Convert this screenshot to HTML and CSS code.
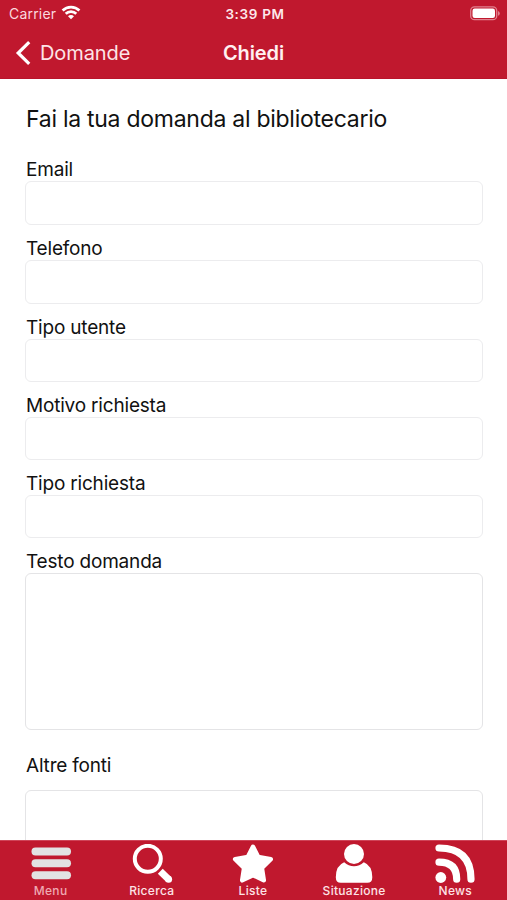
FILE: index.html
```html
<!DOCTYPE html>
<html lang="it">
<head>
<meta charset="utf-8">
<title>Chiedi</title>
<link rel="stylesheet" href="styles.css">
</head>
<body>
<div class="app">
  <header class="header">
    <div class="status">
      <div class="carrier"><span>Carrier</span>
        <svg class="wifi" width="20" height="15" viewBox="0 0 20 15" fill="none" stroke="#fff" stroke-width="2.7"><path d="M1.6 5.5a12 12 0 0 1 16.8 0M4.7 8.8a7.6 7.6 0 0 1 10.6 0"/><path d="M10 14.2 7 11.3a4.2 4.2 0 0 1 6 0Z" fill="#fff" stroke="none"/></svg>
      </div>
      <span class="time">3:39 PM</span>
      <svg class="battery" width="31" height="15" viewBox="0 0 31 15"><rect x=".7" y=".9" width="26" height="12.8" rx="3.8" fill="none" stroke="#e0808e" stroke-width="1.3"/><rect x="2.5" y="2.6" width="22.5" height="9.3" rx="2.2" fill="#fff"/><path d="M28 5v4.8q1.8-.8 1.8-2.4T28 5Z" fill="#e0808e"/></svg>
    </div>
    <nav class="navbar">
      <a class="back"><svg width="16" height="26" viewBox="0 0 16 26" fill="none" stroke="#fff" stroke-width="3.2"><path d="M14.2 2.2 3.2 13l11 10.8"/></svg><span>Domande</span></a>
      <h1>Chiedi</h1>
      <span></span>
    </nav>
  </header>
  <main class="form">
    <h2>Fai la tua domanda al bibliotecario</h2>
    <label class="field"><span>Email</span><input class="tall" type="text"></label>
    <label class="field"><span>Telefono</span><input class="tall" type="text"></label>
    <label class="field"><span>Tipo utente</span><input type="text"></label>
    <label class="field"><span>Motivo richiesta</span><input type="text"></label>
    <label class="field"><span>Tipo richiesta</span><input type="text"></label>
    <label class="field"><span>Testo domanda</span><textarea></textarea></label>
    <label class="field other"><span>Altre fonti</span><textarea></textarea></label>
  </main>
  <footer class="tabs">
    <a class="tab menu"><svg width="42" height="40" viewBox="0 0 42 40" fill="#e2e2e3"><rect x="1.5" y="3.4" width="39.5" height="8" rx="4"/><rect x="1.5" y="15.3" width="39.5" height="8" rx="4"/><rect x="1.5" y="27.2" width="39.5" height="8" rx="4"/></svg><span>Menu</span></a>
    <a class="tab"><svg width="42" height="40" viewBox="0 0 42 40" fill="none" stroke="#fff"><circle cx="16.8" cy="14.8" r="13" stroke-width="4"/><path d="m29.3 27.2 8.5 8.3" stroke-width="7"/><circle cx="37.6" cy="35.3" r="3.5" fill="#fff" stroke="none"/></svg><span>Ricerca</span></a>
    <a class="tab"><svg width="42" height="40" viewBox="0 0 42 40" fill="#fff" stroke="#fff" stroke-width="4.5" stroke-linejoin="round"><path d="m21 2.8 5.2 10.2 12.6 2.2-8.9 8.8 1.9 12.3-10.800-5.200-10.800 5.200 1.900-12.300-8.900-8.800 12.600-2.200Z"/></svg><span>Liste</span></a>
    <a class="tab"><svg width="42" height="40" viewBox="0 0 42 40" fill="#fff"><circle cx="21" cy="10" r="10"/><path d="M11.2 18.2Q15.5 22.3 21 22.3t9.8-4.1q8.500 3.300 8.500 15 0 5.600-5 5.600H7.800q-5 0-5-5.600 0-11.700 8.400-15Z"/></svg><span>Situazione</span></a>
    <a class="tab"><svg width="42" height="40" viewBox="0 0 42 40" fill="none" stroke="#fff" stroke-width="7.2" stroke-linecap="round"><circle cx="6.8" cy="33.5" r="5.4" fill="#fff" stroke="none"/><path d="M5 18.200q17.700 0 17.700 17M5 4q32 0 32 31.200"/></svg><span>News</span></a>
  </footer>
</div>
</body>
</html>
```
FILE: styles.css
```css
* { box-sizing: border-box; }
body { margin: 0; font-family: Inter, sans-serif; color: #111; background: #fff; }
.app { display: flex; flex-direction: column; height: 900px; overflow: hidden; }
.header { flex: none; height: 79px; background: #c0182e; color: #fff; border-bottom: 1px solid #b9142b; }
.status { display: grid; grid-template-columns: 1fr auto 1fr; align-items: center; height: 27px; padding: 0 6px 0 9px; font-size: 14px; }
.carrier { display: flex; align-items: center; gap: 5px; color: #fbd9de; letter-spacing: .2px; }
.wifi { margin-top: -2px; }
.time { font-weight: 600; font-size: 13.5px; color: #fde8eb; letter-spacing: .65px; }
.battery { justify-self: end; }
.navbar { display: grid; grid-template-columns: 1fr auto 1fr; align-items: center; height: 51px; padding: 0 15px; }
.back { display: flex; align-items: center; gap: 9px; font-size: 20px; letter-spacing: -.1px; color: #fde4e7; }
h1 { margin: 0; font-size: 20px; font-weight: 600; letter-spacing: -.1px; color: #fff0f1; }
.form { flex: 1; min-height: 0; overflow: hidden; padding: 26px 24px 0 25px; }
h2 { margin: 0 0 24px; font-size: 23px; line-height: 29px; font-weight: 400; letter-spacing: -.27px; white-space: nowrap; }
.field { display: flex; flex-direction: column; margin-bottom: 12px; font-size: 19px; letter-spacing: -.19px; }
h2, .field span { padding-left: 1px; }
.field span { height: 23px; line-height: 24px; }
input, textarea { display: block; width: 100%; height: 43px; margin: 0; padding: 0 10px; border: 1px solid #ececee; border-radius: 6px; background: #fff; outline: 0; resize: none; font: inherit; }
.tall { height: 44px; }
textarea { height: 157px; border-color: #e4e4e6; }
.field.other { margin-top: 24px; gap: 13px; }
.tabs { flex: none; display: grid; grid-template-columns: repeat(5, 101.2px); height: 60px; background: #c0182e; border-top: 1px solid #cf4458; }
.tab { display: flex; flex-direction: column; align-items: center; padding-top: 3px; font-size: 12px; line-height: 14px; font-weight: 500; color: #fde3e6; letter-spacing: .3px; }
.menu { color: #efa9b2; }
```
